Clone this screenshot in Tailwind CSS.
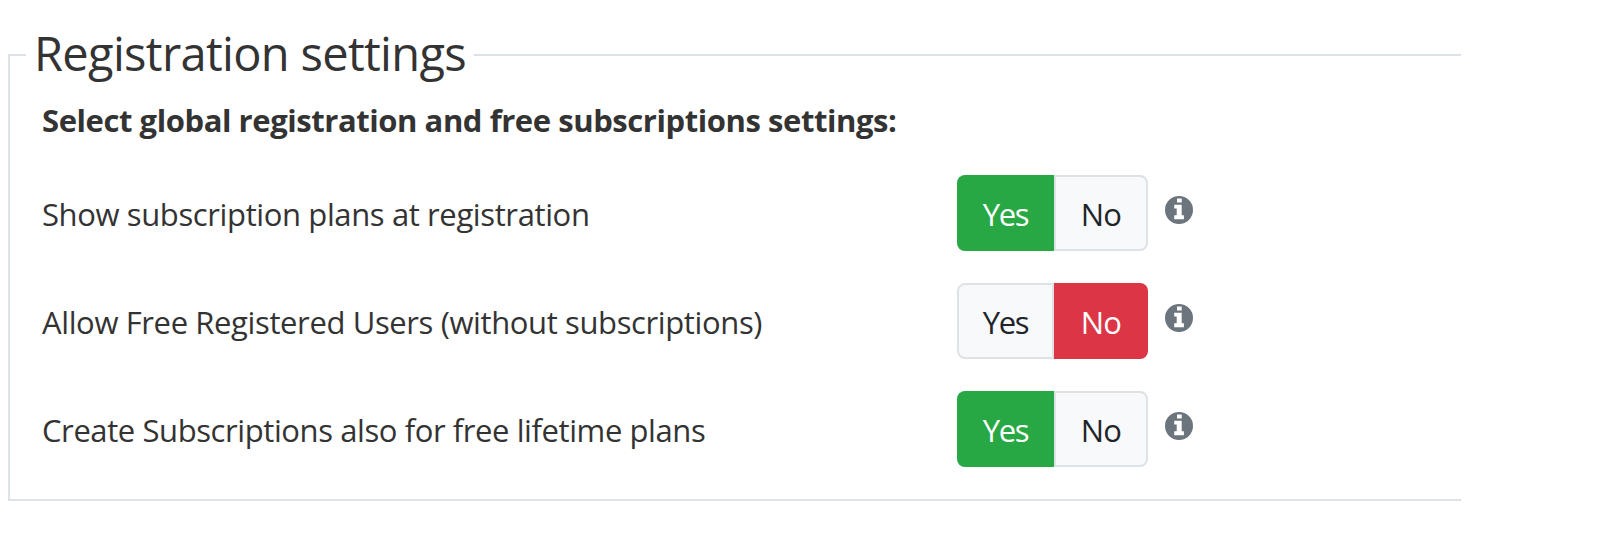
<!DOCTYPE html>
<html lang="en">
<head>
    <meta charset="UTF-8" />
    <meta name="viewport" content="width=device-width, initial-scale=1.0" />
    <title>Registration settings</title>
    <script src="https://cdn.jsdelivr.net/npm/@tailwindcss/browser@4"></script>
</head>
<body class="bg-white h-screen overflow-hidden font-['Open_Sans',sans-serif] text-[31px] text-[#333333]">
    <fieldset class="mt-[26px] ml-2 w-[1453px] border-2 border-r-0 border-[#dee2e6] px-4 pb-8">
        <legend class="px-2 pt-0.5 pb-[5px] text-[47px] leading-[50px] tracking-[-0.67px]">Registration settings</legend>

        <div class="pl-4 pt-[13px] flex flex-col">
            <p class="mb-[31px] font-bold leading-[48px] tracking-[-0.43px]">Select global registration and free subscriptions settings:</p>

            <div class="flex flex-col gap-8">
                <!-- Show plans -->
                <div class="flex h-[76px]">
                    <div class="w-[915px] pt-[15px] leading-[48px] tracking-[-0.38px]">Show subscription plans at registration</div>
                    <div class="flex leading-[48px]">
                        <button class="w-[97px] pt-0.5 rounded-l-lg bg-[#28a745] text-white tracking-[-1.3px]">Yes</button>
                        <button class="w-[94px] pt-0.5 rounded-r-lg border-2 border-[#dee2e6] bg-[#f8f9fa] text-[#212529] tracking-[-0.8px]">No</button>
                    </div>
                    <svg class="ml-[17px] mt-[21px] size-7 text-[#6c757d]" viewBox="0 0 28 28" fill="currentColor">
                        <path fill-rule="evenodd" d="M14 0a14 14 0 1 0 0 28a14 14 0 1 0 0-28zM12 2.6h4.7v4H12zM9.2 8.7h7.5v10.6h2.2v3.9H9.2v-3.9h2.5v-6.7H9.2z" />
                    </svg>
                </div>

                <!-- Free users -->
                <div class="flex h-[76px]">
                    <div class="w-[915px] pt-[15px] leading-[48px] tracking-[-0.38px]">Allow Free Registered Users (without subscriptions)</div>
                    <div class="flex leading-[48px]">
                        <button class="w-[97px] pt-0.5 rounded-l-lg border-2 border-[#dee2e6] bg-[#f8f9fa] text-[#212529] tracking-[-1.3px]">Yes</button>
                        <button class="w-[94px] pt-0.5 rounded-r-lg bg-[#dc3545] text-white tracking-[-0.8px]">No</button>
                    </div>
                    <svg class="ml-[17px] mt-[21px] size-7 text-[#6c757d]" viewBox="0 0 28 28" fill="currentColor">
                        <path fill-rule="evenodd" d="M14 0a14 14 0 1 0 0 28a14 14 0 1 0 0-28zM12 2.6h4.7v4H12zM9.2 8.7h7.5v10.6h2.2v3.9H9.2v-3.9h2.5v-6.7H9.2z" />
                    </svg>
                </div>

                <!-- Lifetime plans -->
                <div class="flex h-[76px]">
                    <div class="w-[915px] pt-[15px] leading-[48px] tracking-[-0.41px]">Create Subscriptions also for free lifetime plans</div>
                    <div class="flex leading-[48px]">
                        <button class="w-[97px] pt-0.5 rounded-l-lg bg-[#28a745] text-white tracking-[-1.3px]">Yes</button>
                        <button class="w-[94px] pt-0.5 rounded-r-lg border-2 border-[#dee2e6] bg-[#f8f9fa] text-[#212529] tracking-[-0.8px]">No</button>
                    </div>
                    <svg class="ml-[17px] mt-[21px] size-7 text-[#6c757d]" viewBox="0 0 28 28" fill="currentColor">
                        <path fill-rule="evenodd" d="M14 0a14 14 0 1 0 0 28a14 14 0 1 0 0-28zM12 2.6h4.7v4H12zM9.2 8.7h7.5v10.6h2.2v3.9H9.2v-3.9h2.5v-6.7H9.2z" />
                    </svg>
                </div>
            </div>
        </div>
    </fieldset>
</body>
</html>
